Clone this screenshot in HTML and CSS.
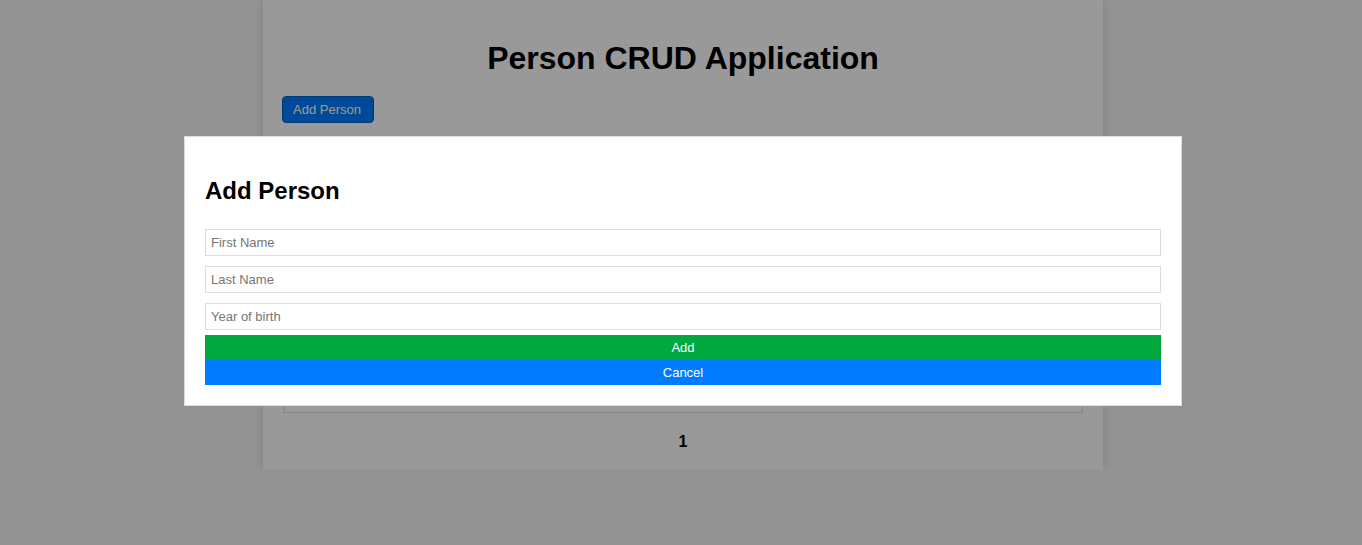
FILE: index.html
```html
<!DOCTYPE html>
<html lang="en">
<head>
  <meta charset="UTF-8" />
  <title>Person CRUD Application</title>
  <link rel="stylesheet" href="styles.css">
</head>
<body>
  <div class="container">
    <h1>Person CRUD Application</h1>

    <button class="btn-open">Add Person</button>

    <table class="people">
      <thead>
        <tr><th>First Name</th><th>Last Name</th><th>Year of birth</th><th>Actions</th></tr>
      </thead>
      <tbody>
        <tr><td>John</td><td>Smith</td><td>1985</td><td></td></tr>
        <tr><td>Anna</td><td>Brown</td><td>1990</td><td></td></tr>
        <tr><td>Peter</td><td>Jones</td><td>1978</td><td></td></tr>
        <tr><td>Maria</td><td>Garcia</td><td>1995</td><td></td></tr>
        <tr><td>David</td><td>Miller</td><td>1982</td><td></td></tr>
        <tr><td>Laura</td><td>Wilson</td><td>1999</td><td></td></tr>
      </tbody>
    </table>

    <div class="pagination">1</div>
  </div>

  <div class="overlay">
    <div class="modal">
      <h2>Add Person</h2>
      <form class="person-form">
        <input type="text" placeholder="First Name" />
        <input type="text" placeholder="Last Name" />
        <input type="text" placeholder="Year of birth" />
        <button type="button" class="btn-add">Add</button>
        <button type="button" class="btn-cancel">Cancel</button>
      </form>
    </div>
  </div>
</body>
</html>
```

FILE: styles.css
```css
body {
  font-family: "Liberation Sans", Arial, sans-serif;
  background-color: #f4f4f4;
  margin: 0;
  padding: 0 0 0 4px;
}

.container {
  width: 800px;
  margin: 0 auto;
  padding: 20px 20px 19px;
  background: #fff;
  box-shadow: 0 0 10px rgba(0,0,0,0.1);
}

h1 {
  text-align: center;
  font-size: 32px;
  margin: 20px 0 19px;
}

.btn-open {
  font-family: inherit;
  font-size: 13px;
  padding: 5px 12px 5px 10px;
  margin-left: -1px;
  background-color: #007bff;
  color: #fff;
  border: 1px solid #0062cc;
  border-radius: 4px;
  cursor: pointer;
}

.people {
  width: 100%;
  margin-top: 15px;
  border-collapse: collapse;
  border: 1px solid #ddd;
  font-size: 14px;
}

.people th,
.people td {
  height: 38px;
  padding: 0 10px;
  border-bottom: 1px solid #ddd;
  text-align: left;
}

.people th {
  height: 39px;
}

.pagination {
  margin-top: 20px;
  text-align: center;
  font-weight: bold;
}

.overlay {
  position: fixed;
  top: 0;
  left: 0;
  right: 0;
  bottom: 0;
  background: rgba(0,0,0,0.4);
  display: flex;
  align-items: center;
  justify-content: center;
}

.modal {
  width: 956px;
  padding: 20px;
  margin: 0 0 3px 4px;
  background: #fff;
  border: 1px solid #ddd;
}

.modal h2 {
  font-size: 24px;
  margin: 20px 0 19px;
}

.person-form {
  display: flex;
  flex-direction: column;
}

.person-form input {
  font-family: inherit;
  font-size: 13px;
  padding: 5px;
  margin: 5px 0;
  border: 1px solid #ddd;
}

.person-form button {
  font-family: inherit;
  font-size: 13px;
  padding: 5px;
  border: none;
  color: #fff;
  cursor: pointer;
}

.btn-add {
  background-color: #00a83f;
}

.btn-cancel {
  background-color: #007bff;
}
```
